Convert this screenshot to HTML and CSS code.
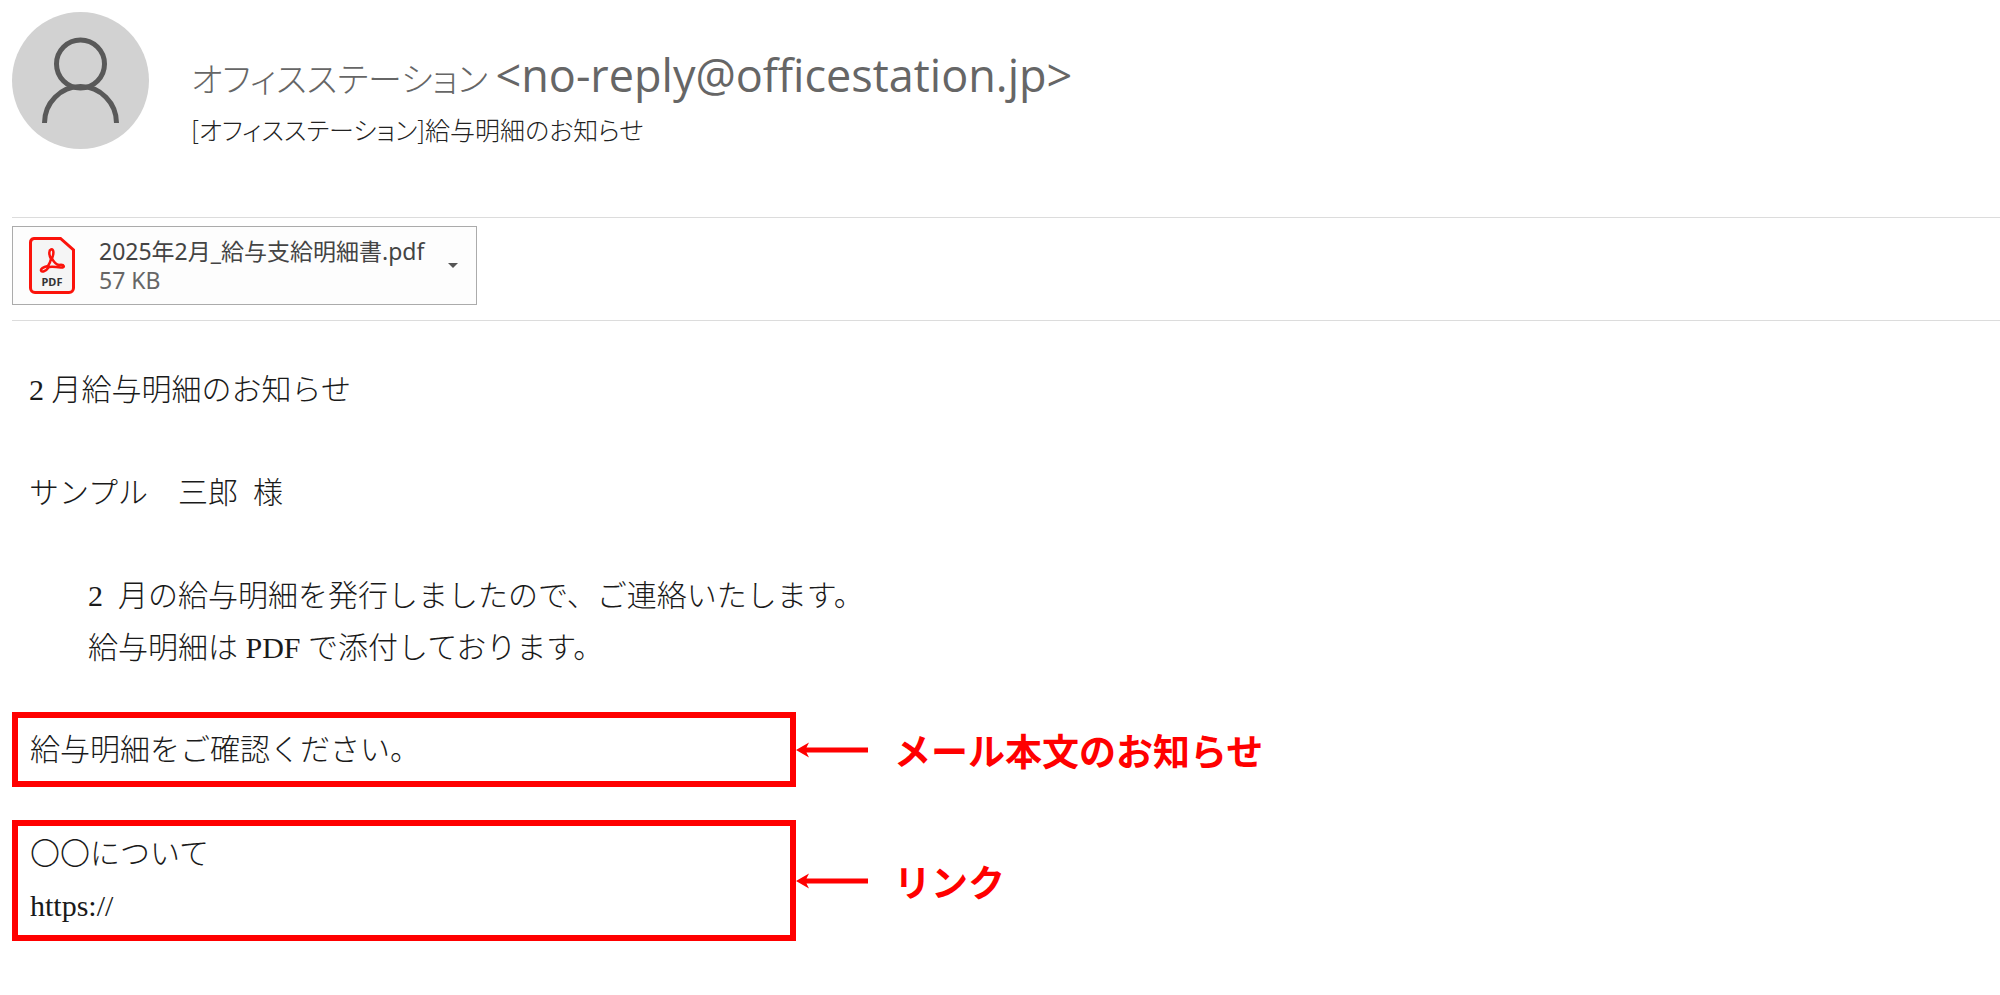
FILE: index.html
```
<!DOCTYPE html>
<html lang="ja">
<head>
  <meta charset="utf-8">
  <meta name="viewport" content="width=device-width">
  <title>給与明細のお知らせ</title>
  <link rel="stylesheet" href="styles.css">
</head>
<body>
  <header class="mail_header">
    <svg class="avatar" viewBox="0 0 137 137" aria-hidden="true">
      <circle cx="68.500" cy="68.500" r="68.500" fill="#d2d2d2"/>
      <g fill="none" stroke="#595959" stroke-width="5">
        <circle cx="68.500" cy="52" r="24"/>
        <path d="M32.500 111a36 36.500 0 0 1 72 0"/>
      </g>
    </svg>
    <div>
      <h1 class="sender"><span class="sender_name">オフィスステーション </span>&lt;no-reply@officestation.jp&gt;</h1>
      <p class="subject">[オフィスステーション]給与明細のお知らせ</p>
    </div>
  </header>

  <section class="attachments">
    <button class="attachment" type="button">
      <svg class="pdf_icon" viewBox="0 0 46 57" aria-hidden="true">
        <path d="M5 1.500H31.500L44.500 13V51a4.500 4.500 0 0 1-4.500 4.500H6A4.500 4.500 0 0 1 1.500 51V5.500A4 4 0 0 1 5 1.500z" fill="#f5f5f5" stroke="#fb130b" stroke-width="3"/>
        <path d="M22 12.500c3-1 3 4 1 9c2 4 4 6 7 6.500c6-1 6 3 2 2.500c-4-.5-8-1-12-.5c-3 4-7 6-8 3.500c-.5-2 3-3.500 7-4.500c1.500-2.500 2.500-4.500 3-7c-2-4-2.500-8.500 0-9.500z" fill="none" stroke="#fb130b" stroke-width="2.500" stroke-linejoin="round"/>
        <text class="pdf_label" x="23" y="49" text-anchor="middle">PDF</text>
      </svg>
      <span class="file">
        <span class="file_name">2025年2月_給与支給明細書.pdf</span>
        <span class="file_size">57 KB</span>
      </span>
      <svg class="caret" viewBox="0 0 10 5" aria-hidden="true"><path d="M0 0h10L5 5z" fill="#555"/></svg>
    </button>
  </section>

  <main class="mail_body">
    <p>2 月給与明細のお知らせ</p>
    <p>サンプル　三郎&nbsp; 様</p>
    <p class="indent">2&nbsp; 月の給与明細を発行しましたので、ご連絡いたします。<br>給与明細は PDF で添付しております。</p>

    <div class="callout">
      <div class="frame frame_notice">給与明細をご確認ください。</div>
      <svg class="arrow" viewBox="0 0 72 16" aria-hidden="true"><path d="M0 8L13 0.500L10.500 5.500H72V10.500H10.500L13 15.500z" fill="#f00"/></svg>
      <strong class="note">メール本文のお知らせ</strong>
    </div>

    <div class="callout">
      <div class="frame frame_link">〇〇について<br><a href="#">https://</a></div>
      <svg class="arrow" viewBox="0 0 72 16" aria-hidden="true"><path d="M0 8L13 0.500L10.500 5.500H72V10.500H10.500L13 15.500z" fill="#f00"/></svg>
      <strong class="note">リンク</strong>
    </div>
  </main>
</body>
</html>
```
FILE: styles.css
```
*, *:before, *:after {
  box-sizing: border-box;
}
body {
  margin: 0;
  padding: 12px 0 12px 12px;
  background: #fff;
  font-family: "Noto Sans", "Noto Sans CJK JP", sans-serif;
}
h1, p {
  margin: 0;
}

.mail_header {
  display: flex;
  gap: 42px;
  padding-bottom: 68px;
}
.avatar {
  width: 137px;
  height: 137px;
  flex: none;
}
.sender {
  padding-top: 39px;
  font-family: "Open Sans", "Noto Sans CJK JP", sans-serif;
  font-size: 45px;
  font-weight: normal;
  line-height: 48px;
  color: #666;
}
.sender_name {
  font-family: "Noto Sans CJK JP", sans-serif;
  font-size: 34px;
  font-weight: 300;
  font-feature-settings: "palt";
}
.subject {
  padding-top: 9px;
  font-family: "Noto Sans CJK JP", sans-serif;
  font-size: 25px;
  font-weight: 300;
  line-height: 36px;
  font-feature-settings: "palt";
  color: #222;
}

.attachments {
  padding: 8px 0 15px;
  border-top: 1px solid #dcdcdc;
  border-bottom: 1px solid #dcdcdc;
}
.attachment {
  display: flex;
  align-items: center;
  height: 79px;
  padding: 0 18px 0 16px;
  border: 1px solid #ababab;
  background: #fdfdfd;
  font-family: "Noto Sans", "Noto Sans CJK JP", sans-serif;
  font-size: 23px;
  line-height: 29px;
  text-align: left;
}
.pdf_icon {
  width: 46px;
  height: 57px;
  margin-right: 24px;
}
.pdf_label {
  font: bold 11px "Noto Sans", sans-serif;
  fill: #333;
}
.file_name, .file_size {
  display: block;
}
.file_name {
  color: #444;
}
.file_size {
  color: #666;
}
.caret {
  width: 10px;
  height: 5px;
  margin-left: 24px;
}

.mail_body {
  padding-top: 43px;
  font-family: "Liberation Serif", "Noto Sans CJK JP", serif;
  font-size: 30px;
  font-weight: 300;
  line-height: 52px;
  color: #1a1a1a;
}
.mail_body p {
  margin: 0 0 51px 17px;
}
.mail_body .indent {
  margin-left: 76px;
  margin-bottom: 38px;
}
.mail_body a {
  color: inherit;
  text-decoration: none;
}

.callout {
  display: flex;
  align-items: center;
  margin-bottom: 33px;
}
.frame {
  flex: 0 1 784px;
  padding: 2px 12px 3px;
  border: 6px solid #f00;
}
.frame_notice {
  padding-top: 6px;
  padding-bottom: 5px;
}
.arrow {
  width: 72px;
  height: 16px;
  flex: none;
}
.note {
  margin-left: 26px;
  font-family: "Noto Sans CJK JP", sans-serif;
  font-size: 37px;
  font-weight: bold;
  color: #f00;
}
```
